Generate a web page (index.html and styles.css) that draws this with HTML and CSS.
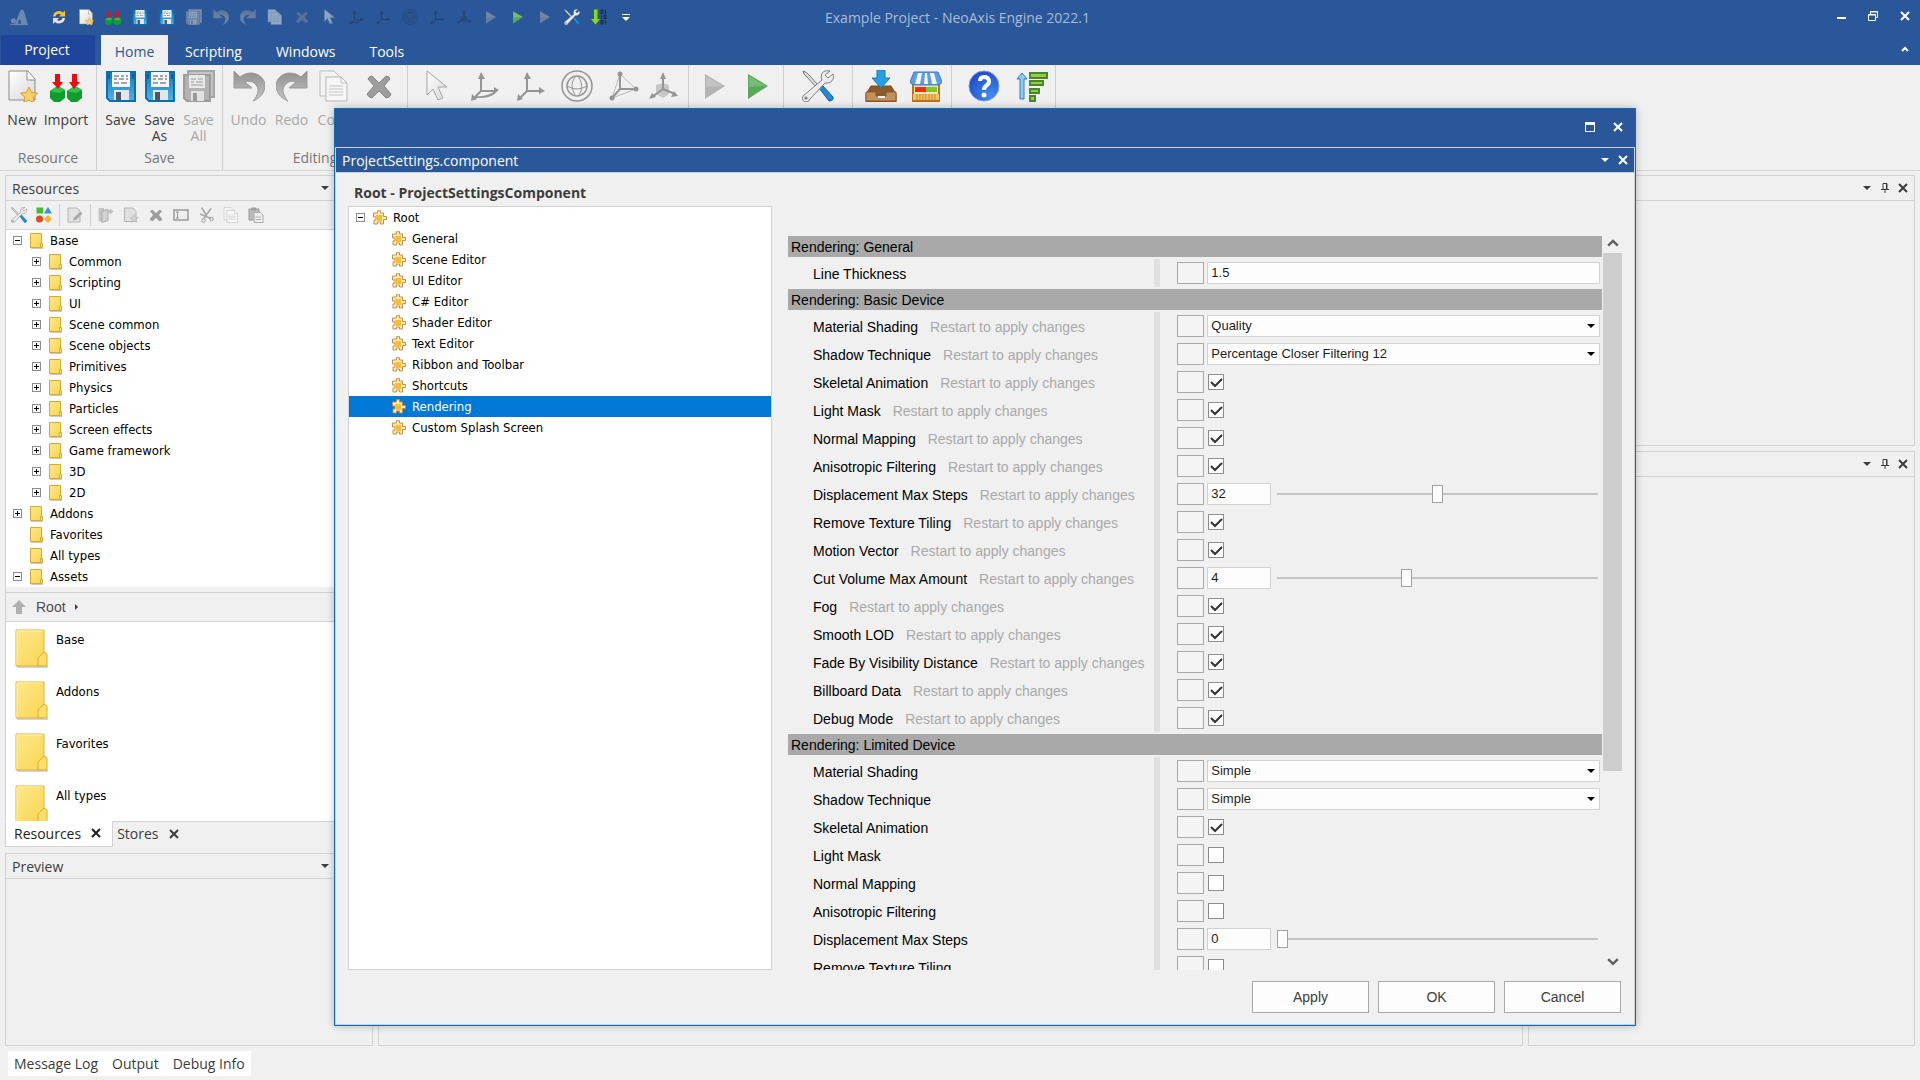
FILE: index.html
```html
<!DOCTYPE html>
<html lang="en">
<head>
    <meta charset="UTF-8">
    <meta name="viewport" content="width=device-width, initial-scale=1.0">
    <title>Example Project - NeoAxis Engine 2022.1</title>
    <link rel="stylesheet" href="styles.css">
</head>
<body>
    <!-- Icon sprite -->
    <svg class="sprite" aria-hidden="true">
        <defs>
            <linearGradient id="g-paper" x1="0" y1="0" x2="1" y2="1"><stop offset="0" stop-color="#fff"/><stop offset="1" stop-color="#d8d8d8"/></linearGradient>
            <linearGradient id="g-blue" x1="0" y1="0" x2="0" y2="1"><stop offset="0" stop-color="#1379bf"/><stop offset="1" stop-color="#4fb2ea"/></linearGradient>
            <linearGradient id="g-gray" x1="0" y1="0" x2="0" y2="1"><stop offset="0" stop-color="#8f8f8f"/><stop offset="1" stop-color="#c6c6c6"/></linearGradient>
            <linearGradient id="g-folder" x1="0" y1="0" x2="1" y2="1"><stop offset="0" stop-color="#ffe88a"/><stop offset="1" stop-color="#f8d552"/></linearGradient>
            <radialGradient id="g-help" cx=".7" cy=".8" r=".9"><stop offset="0" stop-color="#3f8cf0"/><stop offset="1" stop-color="#1c48c4"/></radialGradient>
        </defs>
        <symbol id="i-logo" viewBox="0 0 32 32"><path d="M10 26 18 6l4-3 3 7 5 18H19v-6q-2-3-4 0v6H4z" fill="currentColor"/><circle cx="7" cy="22" r="4" fill="currentColor"/><path d="M2 28h28" stroke="currentColor" stroke-width="2"/></symbol>
        <symbol id="i-refresh" viewBox="0 0 32 32"><path d="M4 15A12 12 0 0 1 24 7l4-4v12H16l4-4A7 7 0 0 0 9 15z" fill="#fbc22f"/><path d="M28 18A12 12 0 0 1 8 26l-4 4V18h12l-4 4a7 7 0 0 0 11-4z" fill="#e8e2d8"/></symbol>
        <symbol id="i-new" viewBox="0 0 32 32"><path d="M3 1h19l7 8v21H3z" fill="url(#g-paper)" stroke="#8c8c8c" stroke-width="1"/><path d="M21 1v9h8" fill="#fff" stroke="#8c8c8c"/><path d="m23 17 2.600 5.500 6 .7-4.500 4 1.200 5.800-5.300-3-5.300 3 1.200-5.800-4.500-4 6-.7z" fill="#ffd064" stroke="#d99a2e"/></symbol>
        <symbol id="i-newgray" viewBox="0 0 32 32"><path d="M3 2h17l6 7v20H3z" fill="#e0e0e0" stroke="#b4b4b4" stroke-width="2"/><path d="m22 15 2.500 5.500 6 .7-4.500 4 1.200 5.800-5.200-3-5.200 3 1.200-5.800-4.500-4 6-.7z" fill="#d0d0d0" stroke="#b0b0b0"/></symbol>
        <symbol id="i-import" viewBox="0 0 32 32"><path d="m0 21 6-4h4l5 3v8l-5 4H4l-4-4zM17 21l6-4h4l5 3v8l-5 4h-6l-4-4z" fill="#0e9c2d"/><path d="m0 21 6-4h4l5 3-6 3zM17 21l6-4h4l5 3-6 3z" fill="#34c04d"/><path d="M5 4h5v8h3l-5 7-6-7h3zM22 4h5v8h3l-6 7-5-7h3z" fill="#f8060c"/></symbol>
        <symbol id="i-save" viewBox="0 0 32 32"><path d="M2 2h28v29H5l-3-3z" fill="url(#g-blue)" stroke="#0b6fae" stroke-width="2"/><path d="M7 2h18v15H7z" fill="#f4f6f8"/><path d="M9 6h5m2 0h3m2 0h2M9 9h3m2 0h5m2 0h2M9 13h5m2 0h6" stroke="#4d545c" stroke-width="1"/><path d="M9 20h15v10H9z" fill="#e4e6e9"/><path d="M11 22h5v8h-5z" fill="#4b5a68"/><path d="M4 4v5" stroke="#083d66" stroke-width="1"/><path d="M28 4v5" stroke="#083d66"/></symbol>
        <symbol id="i-saveall" viewBox="0 0 32 32"><path d="M5 1h26v26H5z" fill="#c4c4c4" stroke="#a5a5a5" stroke-width="2"/><path d="M1 5h26v26H4l-3-3z" fill="#b2b2b2" stroke="#9c9c9c" stroke-width="2"/><path d="M6 5h16v13H6z" fill="#e9e9e9"/><path d="M8 9h5m2 0h5M8 12h3m2 0h7M8 15h12" stroke="#9a9a9a"/><path d="M8 21h13v10H8z" fill="#e2e2e2"/><path d="M10 23h4v8h-4z" fill="#9a9a9a"/></symbol>
        <symbol id="i-undo" viewBox="0 0 32 32"><path d="M1 1v17h18l-7-6c8-3 14 4 13 10-1 3-2 6-5 9 7-3 12-8 12-16C31 4 17-1 7 7z" fill="url(#g-gray)" stroke="#999"/></symbol>
        <symbol id="i-redo" viewBox="0 0 32 32"><path d="M31 1v17H13l7-6C12 9 6 16 7 22c1 3 2 6 5 9-7-3-12-8-12-16C1 4 15-1 25 7z" fill="url(#g-gray)" stroke="#999"/></symbol>
        <symbol id="i-copy" viewBox="0 0 32 32"><path d="M2 1h14l5 5v20H2z" fill="#f2f2f2" stroke="#bdbdbd"/><path d="M8 7h15l6 6v18H8z" fill="#f7f7f7" stroke="#b4b4b4"/><path d="M23 7v6h6M11 16h14M11 19h14M11 22h14M11 25h14" fill="none" stroke="#c2c2c2"/></symbol>
        <symbol id="i-paste" viewBox="0 0 32 32"><path d="M2 4h20v22H2z" fill="#bcbcbc" stroke="#999" stroke-width="2"/><path d="M7 1h9v6H7z" fill="#9e9e9e"/><path d="M12 11h13l5 5v15H12z" fill="#eee" stroke="#aaa" stroke-width="2"/><path d="M15 20h11M15 25h11" stroke="#b0b0b0" stroke-width="2"/></symbol>
        <symbol id="i-delete" viewBox="0 0 32 32"><path d="m9 6 7 7 7-7q3 0 4 3l-6 7 7 8q-1 4-5 4l-7-7-7 7q-4-1-5-4l7-8-6-7q1-3 4-3z" fill="#9d9d9d" stroke="#878787"/></symbol>
        <symbol id="i-cursor" viewBox="0 0 32 32"><path d="M7 1v24l6-6 5 11 5-2-5-11h9z" fill="url(#g-paper)" stroke="#a5a5a5" stroke-width="1"/></symbol>
        <symbol id="i-move" viewBox="0 0 32 32"><path d="M13 5v16L5 29M13 21h14M7 27q15 1 21-6" fill="none" stroke="currentColor" stroke-width="2"/><path d="m10 9 3-7 4 7zM26 17l5 3-5 4zM3 31l1-7 5 5z" fill="currentColor"/></symbol>
        <symbol id="i-axis" viewBox="0 0 32 32"><path d="M13 5v16L5 29M13 21h14" fill="none" stroke="currentColor" stroke-width="2"/><path d="m10 9 3-7 4 7zM25 17l6 4-6 3zM3 31l1-7 5 5z" fill="currentColor"/></symbol>
        <symbol id="i-globe" viewBox="0 0 32 32"><g fill="none" stroke="currentColor"><circle cx="16" cy="16" r="15" stroke-width="1.500"/><circle cx="16" cy="16" r="10" stroke-width="1.500"/><path d="M14 7q-6 8 0 18M17 6q7 10 1 19M6 16q10 6 20 0"/></g></symbol>
        <symbol id="i-scale" viewBox="0 0 32 32"><path d="M13 4v15L5 28M13 19h16" fill="none" stroke="currentColor" stroke-width="2"/><path d="m13 4 16 15L5 28z" fill="none" stroke="currentColor" stroke-width="1" opacity=".6"/><circle cx="13" cy="4" r="2.500" fill="currentColor"/><circle cx="29" cy="19" r="2.500" fill="currentColor"/><circle cx="5" cy="28" r="2.500" fill="currentColor"/></symbol>
        <symbol id="i-gizmo" viewBox="0 0 32 32"><path d="m9 15 7-2 6 2v9l-6 4-7-4z" fill="currentColor" opacity=".45"/><path d="M16 4v15L5 27M16 19l12 5" fill="none" stroke="currentColor" stroke-width="2"/><path d="m13 9 3-7 3 7zM2 29l3-6 4 4zM31 26l-7 1 3-6z" fill="currentColor"/></symbol>
        <symbol id="i-play" viewBox="0 0 32 32"><path d="m6 4 20 12L6 29z" fill="currentColor"/><path d="m7 6 17 10L7 17z" fill="#fff" opacity=".2"/></symbol>
        <symbol id="i-tools" viewBox="0 0 32 32"><path d="M1 1q4 1 6 4l10 11-2 2L5 7Q1 4 1 1z" fill="#ddd" stroke="#777" stroke-width="1"/><path d="m17 18 4-2 10 11q1 4-4 4z" fill="#1f8ad4" stroke="#1266a4"/><path d="M28 1q-8-2-9 6l1 3L1 26q-2 5 3 6 3 0 4-3l15-16c6 1 10-4 8-9l-5 4-3-3z" fill="#ececec" stroke="#7e7e7e"/><circle cx="4" cy="28" r="1.500" fill="#777"/></symbol>
        <symbol id="i-box" viewBox="0 0 32 32"><path d="M6 16h20l5 8v8H1v-8z" fill="#8a5a2c" stroke="#7a4a1c"/><path d="M1 22h10v4h10v-4h10v9H1z" fill="#c4905a" stroke="#8a5a2c"/><path d="M13 27h7" stroke="#eee" stroke-width="2"/><path d="M12 0h8v8h5l-9 10L7 8h5z" fill="#25a0e4" stroke="#1878b4"/></symbol>
        <symbol id="i-store" viewBox="0 0 32 32"><path d="M3 14h26v17H3z" fill="#f8e2b0" stroke="#b8731c" stroke-width="2"/><path d="M5 17h11v5H5z" fill="#e8320e"/><path d="M16 17h11v5H16z" fill="#7cc82a"/><path d="M3 24h26v6H3z" fill="#f2be68"/><path d="M7 24v6m3-6v6m3-6v6m3-6v6m3-6v6m3-6v6m3-6v6" stroke="#c98628"/><path d="M4 2h24l4 10q-1 3-5 3H5q-4 0-5-3z" fill="#5c9ee6" stroke="#3c78c0"/><path d="m8 3-3 11h5l2-11zM15 3l-1 11h4L17 3zM20 3l2 11h5L24 3z" fill="#f4f6fa"/></symbol>
        <symbol id="i-help" viewBox="0 0 32 32"><circle cx="16" cy="16" r="15" fill="url(#g-help)" stroke="#7c98dc" stroke-width="1"/><path d="M12 11q0-4 4-4c6 0 6 6 3 8q-3 2-3 5" fill="none" stroke="#fff" stroke-width="4"/><circle cx="16" cy="25" r="2.500" fill="#fff"/></symbol>
        <symbol id="i-stats" viewBox="0 0 32 32"><path d="m6 3 5 6H8v20H4V9H1z" fill="#8ccdf4" stroke="#2c7cba"/><path d="M14 3h17v5H14zM14 11h13v4H14zM14 19h9v4h-9zM14 26h5v5h-5z" fill="#96cc3e" stroke="#47882a" stroke-width="2"/></symbol>
        <symbol id="i-binary" viewBox="0 0 32 32"><path d="M6 1h7v19h5l-9 11L0 20h6z" fill="#8edc0c"/><path d="M20 2h4v7h-4zM29 1v9M21 12v8M26 12h4v7h-4zM20 23h4v7h-4zM29 22v9" fill="none" stroke="#20262e" stroke-width="2"/></symbol>
        <symbol id="i-more" viewBox="0 0 16 16"><path d="M4 5h8v1H4zM4 8h8l-4 4z" fill="#fff"/></symbol>
        <symbol id="i-shapes" viewBox="0 0 32 32"><path d="M1 1h13v12H1z" fill="#3fbf2c"/><path d="m24 0 8 13H16z" fill="#2f94e0"/><circle cx="7" cy="24" r="7" fill="#e4481c"/><path d="m24 16 8 8-8 8-8-8z" fill="#f5b22c"/></symbol>
        <symbol id="i-edit" viewBox="0 0 32 32"><path d="M2 2h18l6 6v22H2z" fill="#e3e3e3" stroke="#b4b4b4" stroke-width="2"/><path d="m12 27 2-6L27 9l4 4-13 13z" fill="#aaa"/></symbol>
        <symbol id="i-open" viewBox="0 0 32 32"><path d="M2 3h10v25H2z" fill="#c6c6c6" stroke="#aaa"/><path d="m8 8 12-3v22L8 31z" fill="#d2d2d2" stroke="#aaa" stroke-width="2"/><path d="M20 13V6h4V3l7 6-7 6v-4z" fill="#c0c0c0"/></symbol>
        <symbol id="i-rename" viewBox="0 0 32 32"><path d="M2 6h28v20H2z" fill="#eee" stroke="#999" stroke-width="3"/><path d="M6 10h6M9 10v12M6 22h6" stroke="#999" stroke-width="2"/></symbol>
        <symbol id="i-cut" viewBox="0 0 32 32"><path d="m7 1 10 16M26 3 16 17l-4 6M4 14l22 9" stroke="#a5a5a5" stroke-width="3"/><circle cx="11" cy="27" r="3.500" fill="none" stroke="#999" stroke-width="2"/><circle cx="27" cy="24" r="3.500" fill="none" stroke="#999" stroke-width="2"/></symbol>
        <symbol id="i-folder" viewBox="0 0 14 16"><path d="M1 15h12v1H1z" fill="#c9c9c9"/><path d="M.5.500h11v14H.500z" fill="url(#g-folder)" stroke="#d8a834"/><path d="M10.500 14.500v-4h2v4z" fill="#fbe17a" stroke="#d8a834"/></symbol>
        <symbol id="i-bigfolder" viewBox="0 0 34 40"><path d="M2 37h31v2H2z" fill="#d5d5d5"/><path d="M1 1h28v36H1z" fill="url(#g-folder)" stroke="#e0b040" stroke-width="1"/><path d="M2 36V2h26" fill="none" stroke="#fff6b4"/><path d="M23 37v-8l6-6 3 2v12z" fill="#fbdf68" stroke="#dca83a" stroke-width="1"/></symbol>
        <symbol id="i-puzzle" viewBox="0 0 14 15"><path d="M1 14v-4h2V7H.500V3H4.500V.700h3V3h3v3.500h3v3h-3V14H7.500v-2h-3v2z" fill="#fff0b4" stroke="#c98a48"/><path d="M3 5h6v6H4z" fill="#fbbc34"/></symbol>
        <symbol id="i-up" viewBox="0 0 14 14"><path d="m7 0 7 7h-4v7H4V7H0z" fill="#b0b0b0"/></symbol>
        <symbol id="i-x" viewBox="0 0 10 10"><path d="m1 1 8 8m0-8L1 9" stroke="currentColor" stroke-width="2"/></symbol>
        <symbol id="i-down" viewBox="0 0 10 10"><path d="M1 3h8L5 7z" fill="currentColor"/></symbol>
        <symbol id="i-pin" viewBox="0 0 10 10"><path d="M3 6V.500h4V6M1 6.500h8M5 6v4M6.500 1v5" fill="none" stroke="currentColor"/></symbol>
        <symbol id="i-min" viewBox="0 0 10 10"><path d="M1 6h9v2H1z" fill="currentColor"/></symbol>
        <symbol id="i-restore" viewBox="0 0 10 10"><path d="M2.500 3V.500h7v6H8M.500 3.500h7v6h-7zM2 1h8M0 4h8" fill="none" stroke="currentColor"/></symbol>
        <symbol id="i-max" viewBox="0 0 10 10"><path d="M.5.500h9v9h-9z" fill="none" stroke="currentColor"/><path d="M0 0h10v3H0z" fill="currentColor"/></symbol>
        <symbol id="i-chev" viewBox="0 0 10 10"><path d="m2 6 3-3 3 3" fill="none" stroke="currentColor" stroke-width="2"/></symbol>
        <symbol id="i-scrollup" viewBox="0 0 10 10"><path d="m1 6 4-4 4 4" fill="none" stroke="currentColor" stroke-width="2"/></symbol>
        <symbol id="i-scrolldown" viewBox="0 0 10 10"><path d="m1 3 4 4 4-4" fill="none" stroke="currentColor" stroke-width="2"/></symbol>
        <symbol id="i-right" viewBox="0 0 10 10"><path d="m3 2 3 3-3 3z" fill="currentColor"/></symbol>
    </svg>

    <header class="titlebar">
        <svg class="logo"><use href="#i-logo"/></svg>
        <div class="quick">
            <button><svg><use href="#i-refresh"/></svg></button>
            <button><svg><use href="#i-new"/></svg></button>
            <button><svg><use href="#i-import"/></svg></button>
            <button><svg><use href="#i-save"/></svg></button>
            <button><svg><use href="#i-save"/></svg></button>
            <button class="dim"><svg><use href="#i-saveall"/></svg></button>
            <button class="faint"><svg><use href="#i-undo"/></svg></button>
            <button class="faint"><svg><use href="#i-redo"/></svg></button>
            <button class="dim"><svg><use href="#i-copy"/></svg></button>
            <button class="dark"><svg><use href="#i-delete"/></svg></button>
            <button class="dim"><svg><use href="#i-cursor"/></svg></button>
            <button class="dark"><svg><use href="#i-move"/></svg></button>
            <button class="dark"><svg><use href="#i-axis"/></svg></button>
            <button class="dark"><svg><use href="#i-globe"/></svg></button>
            <button class="dark"><svg><use href="#i-axis"/></svg></button>
            <button class="dark"><svg><use href="#i-gizmo"/></svg></button>
            <button class="faint"><svg><use href="#i-play"/></svg></button>
            <button class="run"><svg><use href="#i-play"/></svg></button>
            <button class="faint"><svg><use href="#i-play"/></svg></button>
            <button><svg><use href="#i-tools"/></svg></button>
            <button><svg><use href="#i-binary"/></svg></button>
            <button><svg><use href="#i-more"/></svg></button>
        </div>
        <h1>Example Project - NeoAxis Engine 2022.1</h1>
        <div class="window-buttons">
            <button aria-label="Minimize"><svg><use href="#i-min"/></svg></button>
            <button aria-label="Restore"><svg><use href="#i-restore"/></svg></button>
            <button aria-label="Close"><svg><use href="#i-x"/></svg></button>
        </div>
    </header>

    <nav class="tabs">
        <button class="tab project">Project</button>
        <button class="tab active">Home</button>
        <button class="tab">Scripting</button>
        <button class="tab">Windows</button>
        <button class="tab">Tools</button>
        <button class="collapse" aria-label="Collapse"><svg><use href="#i-chev"/></svg></button>
    </nav>

    <section class="ribbon">
        <div class="group">
            <div class="tools">
                <button class="w36"><svg><use href="#i-new"/></svg>New</button>
                <button class="w52"><svg><use href="#i-import"/></svg>Import</button>
            </div>
            <div class="caption">Resource</div>
        </div>
        <div class="group">
            <div class="tools">
                <button class="w39"><svg><use href="#i-save"/></svg>Save</button>
                <button class="w39"><svg><use href="#i-save"/></svg>Save<br>As</button>
                <button class="w39" disabled><svg><use href="#i-saveall"/></svg>Save<br>All</button>
            </div>
            <div class="caption">Save</div>
        </div>
        <div class="group">
            <div class="tools">
                <button class="w43" disabled><svg><use href="#i-undo"/></svg>Undo</button>
                <button class="w43" disabled><svg><use href="#i-redo"/></svg>Redo</button>
                <button class="w42" disabled><svg><use href="#i-copy"/></svg>Copy</button>
                <button class="w48" disabled><svg><use href="#i-delete"/></svg></button>
            </div>
            <div class="caption">Editing</div>
        </div>
        <div class="group">
            <div class="tools">
                <button class="w48" disabled><svg><use href="#i-cursor"/></svg></button>
                <button class="w48" disabled><svg><use href="#i-move"/></svg></button>
                <button class="w43" disabled><svg><use href="#i-axis"/></svg></button>
                <button class="w52" disabled><svg><use href="#i-globe"/></svg></button>
                <button class="w39" disabled><svg><use href="#i-scale"/></svg></button>
                <button class="w42" disabled><svg><use href="#i-gizmo"/></svg></button>
            </div>
        </div>
        <div class="group">
            <div class="tools">
                <button class="w43 stopped" disabled><svg><use href="#i-play"/></svg></button>
                <button class="w43 run"><svg><use href="#i-play"/></svg></button>
            </div>
        </div>
        <div class="group">
            <div class="tools">
                <button class="w60"><svg><use href="#i-tools"/></svg></button>
            </div>
        </div>
        <div class="group">
            <div class="tools">
                <button class="w48"><svg><use href="#i-box"/></svg></button>
                <button class="w42"><svg><use href="#i-store"/></svg></button>
            </div>
        </div>
        <div class="group">
            <div class="tools">
                <button class="w56"><svg><use href="#i-help"/></svg></button>
                <button class="w39"><svg><use href="#i-stats"/></svg></button>
            </div>
        </div>
    </section>

    <main class="workspace">
        <div class="column left">
            <section class="panel resources">
                <header class="panel-head">
                    <h2>Resources</h2>
                    <div class="panel-buttons">
                        <button aria-label="Menu"><svg><use href="#i-down"/></svg></button>
                        <button aria-label="Pin"><svg><use href="#i-pin"/></svg></button>
                        <button aria-label="Close"><svg><use href="#i-x"/></svg></button>
                    </div>
                </header>
                <div class="toolbar">
                    <button><svg><use href="#i-tools"/></svg></button>
                    <button><svg><use href="#i-shapes"/></svg></button>
                    <span class="sep"></span>
                    <button><svg><use href="#i-edit"/></svg></button>
                    <span class="sep"></span>
                    <button><svg><use href="#i-open"/></svg></button>
                    <button><svg><use href="#i-newgray"/></svg></button>
                    <button><svg><use href="#i-delete"/></svg></button>
                    <button><svg><use href="#i-rename"/></svg></button>
                    <button><svg><use href="#i-cut"/></svg></button>
                    <button><svg><use href="#i-copy"/></svg></button>
                    <button><svg><use href="#i-paste"/></svg></button>
                </div>
                <ul class="tree">
                    <li><i class="box"></i><svg><use href="#i-folder"/></svg>Base</li>
                    <li class="child"><i class="box plus"></i><svg><use href="#i-folder"/></svg>Common</li>
                    <li class="child"><i class="box plus"></i><svg><use href="#i-folder"/></svg>Scripting</li>
                    <li class="child"><i class="box plus"></i><svg><use href="#i-folder"/></svg>UI</li>
                    <li class="child"><i class="box plus"></i><svg><use href="#i-folder"/></svg>Scene common</li>
                    <li class="child"><i class="box plus"></i><svg><use href="#i-folder"/></svg>Scene objects</li>
                    <li class="child"><i class="box plus"></i><svg><use href="#i-folder"/></svg>Primitives</li>
                    <li class="child"><i class="box plus"></i><svg><use href="#i-folder"/></svg>Physics</li>
                    <li class="child"><i class="box plus"></i><svg><use href="#i-folder"/></svg>Particles</li>
                    <li class="child"><i class="box plus"></i><svg><use href="#i-folder"/></svg>Screen effects</li>
                    <li class="child"><i class="box plus"></i><svg><use href="#i-folder"/></svg>Game framework</li>
                    <li class="child"><i class="box plus"></i><svg><use href="#i-folder"/></svg>3D</li>
                    <li class="child"><i class="box plus"></i><svg><use href="#i-folder"/></svg>2D</li>
                    <li><i class="box plus"></i><svg><use href="#i-folder"/></svg>Addons</li>
                    <li><i></i><svg><use href="#i-folder"/></svg>Favorites</li>
                    <li><i></i><svg><use href="#i-folder"/></svg>All types</li>
                    <li><i class="box"></i><svg><use href="#i-folder"/></svg>Assets</li>
                </ul>
                <div class="crumbs">
                    <svg class="up"><use href="#i-up"/></svg>
                    <a href="#">Root</a>
                    <svg class="next"><use href="#i-right"/></svg>
                </div>
                <ul class="files">
                    <li><svg><use href="#i-bigfolder"/></svg>Base</li>
                    <li><svg><use href="#i-bigfolder"/></svg>Addons</li>
                    <li><svg><use href="#i-bigfolder"/></svg>Favorites</li>
                    <li><svg><use href="#i-bigfolder"/></svg>All types</li>
                </ul>
            </section>
            <div class="dock-tabs">
                <button class="active">Resources<svg><use href="#i-x"/></svg></button>
                <button>Stores<svg><use href="#i-x"/></svg></button>
            </div>
            <section class="panel preview">
                <header class="panel-head">
                    <h2>Preview</h2>
                    <div class="panel-buttons">
                        <button aria-label="Menu"><svg><use href="#i-down"/></svg></button>
                        <button aria-label="Pin"><svg><use href="#i-pin"/></svg></button>
                        <button aria-label="Close"><svg><use href="#i-x"/></svg></button>
                    </div>
                </header>
            </section>
        </div>
        <section class="panel center"></section>
        <div class="column right">
            <section class="panel objects">
                <header class="panel-head">
                    <div class="panel-buttons">
                        <button aria-label="Menu"><svg><use href="#i-down"/></svg></button>
                        <button aria-label="Pin"><svg><use href="#i-pin"/></svg></button>
                        <button aria-label="Close"><svg><use href="#i-x"/></svg></button>
                    </div>
                </header>
            </section>
            <section class="panel grow">
                <header class="panel-head">
                    <div class="panel-buttons">
                        <button aria-label="Menu"><svg><use href="#i-down"/></svg></button>
                        <button aria-label="Pin"><svg><use href="#i-pin"/></svg></button>
                        <button aria-label="Close"><svg><use href="#i-x"/></svg></button>
                    </div>
                </header>
            </section>
        </div>
    </main>

    <footer class="statusbar">
        <div class="logs">
            <button>Message Log</button>
            <button>Output</button>
            <button>Debug Info</button>
        </div>
    </footer>

    <!-- Floating settings window -->
    <div class="dialog" role="dialog" aria-label="ProjectSettings.component">
        <div class="dialog-title">
            <button aria-label="Maximize"><svg><use href="#i-max"/></svg></button>
            <button aria-label="Close"><svg><use href="#i-x"/></svg></button>
        </div>
        <header class="dialog-head">
            <h2>ProjectSettings.component</h2>
            <button aria-label="Menu"><svg><use href="#i-down"/></svg></button>
            <button aria-label="Close"><svg><use href="#i-x"/></svg></button>
        </header>
        <div class="dialog-body">
            <h3>Root - ProjectSettingsComponent</h3>
            <div class="split">
                <ul class="tree settings-tree">
                    <li><i class="box"></i><svg><use href="#i-puzzle"/></svg>Root</li>
                    <li class="child"><i></i><svg><use href="#i-puzzle"/></svg>General</li>
                    <li class="child"><i></i><svg><use href="#i-puzzle"/></svg>Scene Editor</li>
                    <li class="child"><i></i><svg><use href="#i-puzzle"/></svg>UI Editor</li>
                    <li class="child"><i></i><svg><use href="#i-puzzle"/></svg>C# Editor</li>
                    <li class="child"><i></i><svg><use href="#i-puzzle"/></svg>Shader Editor</li>
                    <li class="child"><i></i><svg><use href="#i-puzzle"/></svg>Text Editor</li>
                    <li class="child"><i></i><svg><use href="#i-puzzle"/></svg>Ribbon and Toolbar</li>
                    <li class="child"><i></i><svg><use href="#i-puzzle"/></svg>Shortcuts</li>
                    <li class="child selected"><i></i><svg><use href="#i-puzzle"/></svg>Rendering</li>
                    <li class="child"><i></i><svg><use href="#i-puzzle"/></svg>Custom Splash Screen</li>
                </ul>
                <div class="props">
                    <div class="props-list">
                        <h4>Rendering: General</h4>
                        <div class="rows">
                            <div class="row"><div class="name"><label for="line">Line Thickness</label></div><div class="value"><button></button><input type="text" id="line" value="1.5"></div></div>
                        </div>
                        <h4>Rendering: Basic Device</h4>
                        <div class="rows">
                            <div class="row"><div class="name"><label for="b-shading">Material Shading</label><span>Restart to apply changes</span></div><div class="value"><button></button><select id="b-shading"><option>Quality</option></select></div></div>
                            <div class="row"><div class="name"><label for="b-shadow">Shadow Technique</label><span>Restart to apply changes</span></div><div class="value"><button></button><select id="b-shadow"><option>Percentage Closer Filtering 12</option></select></div></div>
                            <div class="row"><div class="name"><label for="b-skeletal">Skeletal Animation</label><span>Restart to apply changes</span></div><div class="value"><button></button><input type="checkbox" id="b-skeletal" checked></div></div>
                            <div class="row"><div class="name"><label for="b-light">Light Mask</label><span>Restart to apply changes</span></div><div class="value"><button></button><input type="checkbox" id="b-light" checked></div></div>
                            <div class="row"><div class="name"><label for="b-normal">Normal Mapping</label><span>Restart to apply changes</span></div><div class="value"><button></button><input type="checkbox" id="b-normal" checked></div></div>
                            <div class="row"><div class="name"><label for="b-aniso">Anisotropic Filtering</label><span>Restart to apply changes</span></div><div class="value"><button></button><input type="checkbox" id="b-aniso" checked></div></div>
                            <div class="row"><div class="name"><label for="b-disp">Displacement Max Steps</label><span>Restart to apply changes</span></div><div class="value"><button></button><input type="text" class="short" id="b-disp" value="32"><input type="range" aria-label="Displacement Max Steps" min="0" max="64" value="32"></div></div>
                            <div class="row"><div class="name"><label for="b-tiling">Remove Texture Tiling</label><span>Restart to apply changes</span></div><div class="value"><button></button><input type="checkbox" id="b-tiling" checked></div></div>
                            <div class="row"><div class="name"><label for="b-motion">Motion Vector</label><span>Restart to apply changes</span></div><div class="value"><button></button><input type="checkbox" id="b-motion" checked></div></div>
                            <div class="row"><div class="name"><label for="b-cut">Cut Volume Max Amount</label><span>Restart to apply changes</span></div><div class="value"><button></button><input type="text" class="short" id="b-cut" value="4"><input type="range" aria-label="Cut Volume Max Amount" min="0" max="10" value="4"></div></div>
                            <div class="row"><div class="name"><label for="b-fog">Fog</label><span>Restart to apply changes</span></div><div class="value"><button></button><input type="checkbox" id="b-fog" checked></div></div>
                            <div class="row"><div class="name"><label for="b-lod">Smooth LOD</label><span>Restart to apply changes</span></div><div class="value"><button></button><input type="checkbox" id="b-lod" checked></div></div>
                            <div class="row"><div class="name"><label for="b-fade">Fade By Visibility Distance</label><span>Restart to apply changes</span></div><div class="value"><button></button><input type="checkbox" id="b-fade" checked></div></div>
                            <div class="row"><div class="name"><label for="b-billboard">Billboard Data</label><span>Restart to apply changes</span></div><div class="value"><button></button><input type="checkbox" id="b-billboard" checked></div></div>
                            <div class="row"><div class="name"><label for="b-debug">Debug Mode</label><span>Restart to apply changes</span></div><div class="value"><button></button><input type="checkbox" id="b-debug" checked></div></div>
                        </div>
                        <h4>Rendering: Limited Device</h4>
                        <div class="rows">
                            <div class="row"><div class="name"><label for="l-shading">Material Shading</label></div><div class="value"><button></button><select id="l-shading"><option>Simple</option></select></div></div>
                            <div class="row"><div class="name"><label for="l-shadow">Shadow Technique</label></div><div class="value"><button></button><select id="l-shadow"><option>Simple</option></select></div></div>
                            <div class="row"><div class="name"><label for="l-skeletal">Skeletal Animation</label></div><div class="value"><button></button><input type="checkbox" id="l-skeletal" checked></div></div>
                            <div class="row"><div class="name"><label for="l-light">Light Mask</label></div><div class="value"><button></button><input type="checkbox" id="l-light"></div></div>
                            <div class="row"><div class="name"><label for="l-normal">Normal Mapping</label></div><div class="value"><button></button><input type="checkbox" id="l-normal"></div></div>
                            <div class="row"><div class="name"><label for="l-aniso">Anisotropic Filtering</label></div><div class="value"><button></button><input type="checkbox" id="l-aniso"></div></div>
                            <div class="row"><div class="name"><label for="l-disp">Displacement Max Steps</label></div><div class="value"><button></button><input type="text" class="short" id="l-disp" value="0"><input type="range" aria-label="Displacement Max Steps" min="0" max="64" value="0"></div></div>
                            <div class="row"><div class="name"><label for="l-tiling">Remove Texture Tiling</label></div><div class="value"><button></button><input type="checkbox" id="l-tiling"></div></div>
                        </div>
                    </div>
                    <div class="scrollbar">
                        <svg><use href="#i-scrollup"/></svg>
                        <div class="track"><div class="thumb"></div></div>
                        <svg><use href="#i-scrolldown"/></svg>
                    </div>
                </div>
            </div>
            <div class="actions">
                <button>Apply</button>
                <button>OK</button>
                <button>Cancel</button>
            </div>
        </div>
    </div>
</body>
</html>
```
FILE: styles.css
```css
* {
    box-sizing: border-box;
}

body {
    margin: 0;
    height: 100vh;
    display: flex;
    flex-direction: column;
    overflow: hidden;
    position: relative;
    background-color: #f0f0f0;
    color: #3c3c3c;
    font-family: "Open Sans", "Noto Sans", sans-serif;
    font-size: 14px;
}

h1, h2, h3, h4, ul {
    margin: 0;
    padding: 0;
    font-size: 14px;
    font-weight: normal;
    list-style: none;
}

button {
    margin: 0;
    padding: 0;
    border: none;
    background: none;
    color: inherit;
    font: inherit;
}

svg {
    display: block;
    flex-shrink: 0;
}

.sprite {
    position: absolute;
    width: 0;
    height: 0;
}

/* Title bar */
.titlebar {
    height: 35px;
    display: flex;
    align-items: center;
    padding-bottom: 1px;
    background-color: #2a579a;
    color: white;
}

.logo {
    width: 20px;
    height: 20px;
    margin-left: 9px;
    color: #6d87b0;
}

.quick {
    flex: 1;
    display: flex;
    padding-left: 16px;
}

.quick button {
    width: 27px;
    display: flex;
    justify-content: center;
}

.quick svg {
    width: 16px;
    height: 16px;
}

.quick .dim {
    opacity: 0.5;
}

.quick .faint {
    color: #a5a5a5;
    opacity: 0.5;
}

.quick .dark {
    color: #222;
    opacity: 0.4;
}

.run {
    color: #57a957;
}

.titlebar h1 {
    margin-right: 40px;
    color: #a9bcd8;
}

.window-buttons {
    flex: 1;
    display: flex;
    justify-content: flex-end;
    gap: 22px;
    padding: 0 10px 3px 0;
}

.window-buttons svg,
.collapse svg,
.dialog-title svg,
.dialog-head svg,
.panel-buttons svg {
    width: 10px;
    height: 10px;
}

/* Ribbon tabs */
.tabs {
    height: 30px;
    display: flex;
    padding-left: 1px;
    background-color: #2a579a;
    color: white;
}

.tab {
    padding: 2px 17px 0;
}

.tab.project {
    width: 94px;
    margin-right: 6px;
    padding: 0 2px 1px 0;
    background-color: #1e449c;
}

.tab.active {
    width: 67px;
    padding: 2px 0 0;
    background-color: #f0f0f0;
    color: #2a579a;
}

.collapse {
    margin-left: auto;
    padding-right: 10px;
}

/* Ribbon */
.ribbon {
    height: 106px;
    display: flex;
    border-bottom: 1px solid #d5d5d5;
}

.group {
    display: flex;
    flex-direction: column;
    justify-content: space-between;
    padding: 5px 4px 1px;
    border-right: 1px solid #cfcfcf;
}

.tools {
    display: flex;
}

.tools button {
    display: flex;
    flex-direction: column;
    align-items: center;
    line-height: 16px;
}

.tools button:disabled {
    color: #a8a8a8;
}

.tools svg {
    width: 32px;
    height: 32px;
    margin-bottom: 10px;
}

.tools button:disabled svg {
    color: #959595;
}

.tools .stopped:disabled svg {
    color: #b4b4b4;
}

.caption {
    color: #767676;
    line-height: 22px;
    text-align: center;
}

.w36 { width: 36px; }
.w39 { width: 39px; }
.w42 { width: 42px; }
.w43 { width: 43px; }
.w48 { width: 48px; }
.w52 { width: 52px; }
.w56 { width: 56px; }
.w60 { width: 60px; }

/* Docked panels */
.workspace {
    flex: 1;
    min-height: 0;
    display: flex;
    gap: 5px;
    padding: 4px 5px 5px;
}

.column {
    display: flex;
    flex-direction: column;
}

.left {
    width: 368px;
}

.right {
    width: 387px;
    gap: 5px;
}

.panel {
    border: 1px solid #d2d2d5;
}

.center, .grow {
    flex: 1;
}

.objects {
    height: 271px;
}

.panel-head {
    height: 25px;
    display: flex;
    align-items: center;
    border-bottom: 1px solid #d2d2d5;
}

.panel-head h2 {
    padding-left: 6px;
}

.panel-buttons {
    margin-left: auto;
    display: flex;
    gap: 8px;
    padding-right: 6px;
}

.resources {
    flex: 1;
    min-height: 0;
    display: flex;
    flex-direction: column;
    border-bottom: none;
}

.resources .panel-head {
    flex-shrink: 0;
}

.toolbar {
    height: 29px;
    flex-shrink: 0;
    display: flex;
    align-items: center;
    border-bottom: 1px solid #d2d2d5;
}

.toolbar button {
    width: 25px;
    display: flex;
    justify-content: center;
}

.toolbar svg {
    width: 16px;
    height: 16px;
}

.sep {
    width: 1px;
    height: 22px;
    margin: 0 2px 0 3px;
    background-color: #cfcfcf;
}

/* Trees */
.tree {
    background-color: white;
    color: black;
    font-family: "DejaVu Sans Condensed", "DejaVu Sans", sans-serif;
    font-size: 13px;
}

.tree li {
    height: 21px;
    display: flex;
    align-items: center;
    padding-left: 7px;
}

.tree .child {
    padding-left: 26px;
}

.tree svg {
    width: 14px;
    height: 16px;
    margin: 0 6px 0 8px;
}

.tree i {
    width: 9px;
    height: 9px;
}

.tree .box {
    border: 1px solid #8c8c8c;
    background: linear-gradient(black, black) center / 5px 1px no-repeat;
}

.tree .plus {
    background: linear-gradient(black, black) center / 5px 1px no-repeat, linear-gradient(black, black) center / 1px 5px no-repeat;
}

.tree .selected {
    background-color: #0078d7;
    color: white;
}

.crumbs {
    height: 30px;
    flex-shrink: 0;
    display: flex;
    align-items: center;
    margin-top: 5px;
    padding-left: 6px;
    border-top: 1px solid #d2d2d5;
    border-bottom: 1px solid #d2d2d5;
}

.crumbs a {
    margin: 0 6px 0 10px;
    color: #4c4c4c;
    font-family: "Liberation Sans", sans-serif;
    text-decoration: none;
}

.crumbs .up {
    width: 14px;
    height: 14px;
}

.crumbs .next {
    width: 10px;
    height: 10px;
}

.files {
    flex: 1;
    min-height: 0;
    overflow: hidden;
    background-color: white;
    color: black;
    font-family: "DejaVu Sans Condensed", "DejaVu Sans", sans-serif;
    font-size: 13px;
}

.files li {
    height: 52px;
    display: flex;
    gap: 7px;
    padding: 7px 0 0 9px;
    line-height: 21px;
}

.files svg {
    width: 34px;
    height: 40px;
}

.dock-tabs {
    display: flex;
    height: 26px;
    margin-bottom: 6px;
}

.dock-tabs button {
    display: flex;
    align-items: center;
    gap: 10px;
    padding: 0 11px 2px 4px;
    border-top: 1px solid #d2d2d5;
}

.dock-tabs button:last-child {
    flex: 1;
}

.dock-tabs .active {
    padding-left: 8px;
    border: 1px solid #d2d2d5;
    border-top-color: white;
    background-color: white;
    color: #1e1e1e;
}

.dock-tabs svg {
    width: 10px;
    height: 10px;
}

.preview {
    height: 193px;
}

/* Bottom bar */
.statusbar {
    display: flex;
    padding: 0 8px 4px;
}

.logs {
    height: 25px;
    display: flex;
    gap: 14px;
    padding: 0 6px;
    background-color: white;
}

/* Settings window */
.dialog {
    position: absolute;
    top: 108px;
    right: 284px;
    bottom: 54px;
    left: 334px;
    display: flex;
    flex-direction: column;
    border: 1px solid #0c6cbc;
    background-color: #f0f0f0;
    box-shadow: 0 0 8px rgba(0, 0, 0, 0.25);
}

.dialog-title {
    height: 38px;
    display: flex;
    align-items: center;
    justify-content: flex-end;
    gap: 18px;
    padding: 0 12px 2px 0;
    background-color: #2a579a;
    color: white;
}

.dialog-head {
    height: 26px;
    display: flex;
    align-items: center;
    gap: 8px;
    padding: 0 6px;
    border: 1px solid #cdd3dc;
    background-color: #2a579a;
    color: white;
}

.dialog-head h2 {
    flex: 1;
}

.dialog-body {
    flex: 1;
    min-height: 0;
    display: flex;
    flex-direction: column;
    padding: 10px 12px 11px;
    border: 1px solid #cfcfcf;
    border-top: none;
}

.dialog-body h3 {
    height: 23px;
    padding-left: 6px;
    font-weight: bold;
}

.split {
    flex: 1;
    min-height: 0;
    display: flex;
    gap: 16px;
}

.settings-tree {
    flex: 0 0 424px;
    border: 1px solid #d2d2d5;
}

.settings-tree svg {
    height: 15px;
}

.props {
    flex: 1;
    display: flex;
    gap: 1px;
    padding-top: 30px;
    color: black;
    font-family: "Liberation Sans", Arial, sans-serif;
}

.props-list {
    flex: 1;
    overflow: hidden;
}

.props h4 {
    height: 21px;
    padding-left: 3px;
    line-height: 22px;
    background-color: #a9a9a9;
}

.rows {
    padding: 2px 0;
}

.row {
    height: 28px;
    display: flex;
}

.name {
    width: 45%;
    display: flex;
    align-items: center;
    gap: 12px;
    padding: 2px 0 0 25px;
    white-space: nowrap;
}

.name span {
    color: #a9a9a9;
}

.value {
    flex: 1;
    display: flex;
    align-items: center;
    gap: 3px;
    padding: 0 2px 0 17px;
    border-left: 6px solid #e0e0e0;
}

.value button {
    width: 27px;
    height: 22px;
    border: 1px solid #a9a9a9;
    background-color: #f4f4f4;
}

.value input[type="text"],
.value select {
    flex: 1;
    min-width: 0;
    height: 22px;
    margin: 0;
    padding: 0 3px 1px;
    border: 1px solid #d2d2d5;
    border-radius: 0;
    background-color: #fdfdfd;
    color: #1e1e1e;
    font-family: inherit;
    font-size: 13px;
    outline: none;
}

.value select {
    appearance: none;
    background-image: url("data:image/svg+xml,%3Csvg xmlns='http://www.w3.org/2000/svg' width='8' height='4'%3E%3Cpath d='M0 0h8L4 4z'/%3E%3C/svg%3E");
    background-repeat: no-repeat;
    background-position: right 4px center;
}

.value input.short {
    flex: 0 0 64px;
}

.value input[type="checkbox"] {
    appearance: none;
    width: 16px;
    height: 16px;
    margin: 0 1px;
    border: 1px solid #8c8c8c;
    background-color: white;
}

.value input[type="checkbox"]:checked {
    background-image: url("data:image/svg+xml,%3Csvg xmlns='http://www.w3.org/2000/svg' width='14' height='14'%3E%3Cpath d='m2 7 4 4 7-7' fill='none' stroke='%23333' stroke-width='2'/%3E%3C/svg%3E");
    background-position: center;
}

.value input[type="range"] {
    appearance: none;
    flex: 1;
    min-width: 0;
    height: 18px;
    margin: 0 2px 0 3px;
    background: linear-gradient(#c4c4c4, #c4c4c4) center / 100% 2px no-repeat;
}

.value input[type="range"]::-webkit-slider-thumb {
    appearance: none;
    width: 11px;
    height: 18px;
    border: 1px solid #a0a0a0;
    background-color: #fdfdfd;
}

.scrollbar {
    width: 19px;
    display: flex;
    flex-direction: column;
    align-items: center;
    color: #5f5f5f;
}

.scrollbar svg {
    width: 12px;
    height: 17px;
}

.track {
    flex: 1;
    align-self: stretch;
}

.thumb {
    height: 74%;
    background-color: #cdcdcd;
}

.actions {
    display: flex;
    justify-content: flex-end;
    gap: 9px;
    margin-top: 11px;
    padding-right: 1px;
}

.actions button {
    width: 117px;
    height: 32px;
    border: 1px solid #a9a9a9;
    background-color: #fdfdfd;
    font-family: "Liberation Sans", Arial, sans-serif;
}
```
